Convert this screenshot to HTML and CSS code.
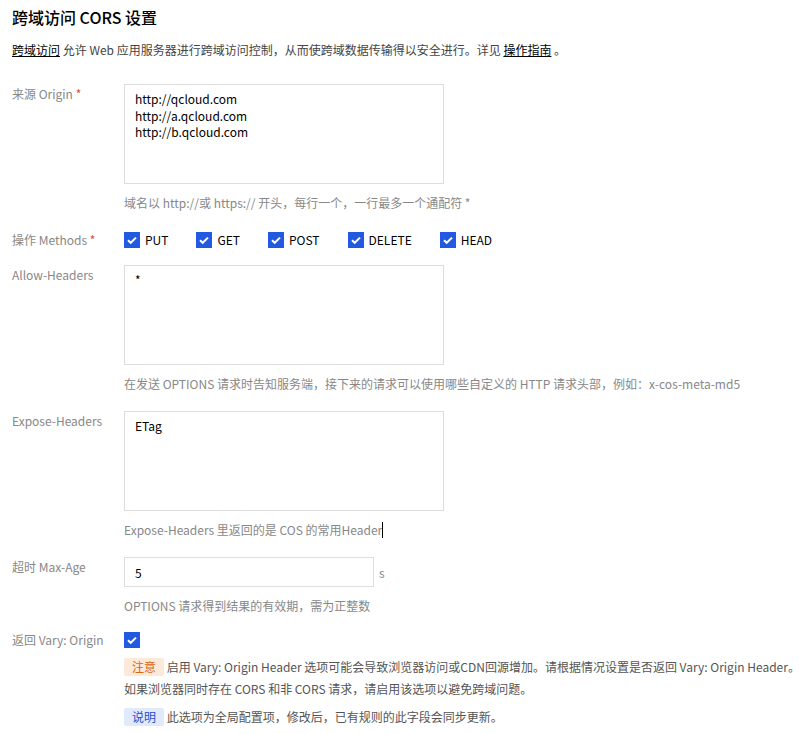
FILE: index.html
```html
<!DOCTYPE html>
<html lang="zh-CN">
<head>
  <meta charset="UTF-8" />
  <meta name="viewport" content="width=device-width, initial-scale=1.0" />
  <title>跨域访问 CORS 设置</title>
  <link rel="stylesheet" href="styles.css">
</head>
<body>
  <h2 class="title">跨域访问 CORS 设置</h2>
  <p class="desc"><a href="#">跨域访问</a> 允许 Web 应用服务器进行跨域访问控制，从而使跨域数据传输得以安全进行。详见 <a href="#">操作指南</a> 。</p>

  <div class="form-item row-origin">
    <label class="form-label">来源 Origin <span class="req">*</span></label>
    <div class="form-control">
      <textarea class="text-area" readonly>http://qcloud.com
http://a.qcloud.com
http://b.qcloud.com</textarea>
      <p class="hint">域名以 http://或 https:// 开头，每行一个，一行最多一个通配符 *</p>
    </div>
  </div>

  <div class="form-item row-methods">
    <label class="form-label">操作 Methods <span class="req">*</span></label>
    <div class="form-control methods">
      <span class="check"><i class="box"><svg viewBox="0 0 16 16"><path d="M4 8.2l2.7 2.6L12 5.6" /></svg></i>PUT</span>
      <span class="check"><i class="box"><svg viewBox="0 0 16 16"><path d="M4 8.2l2.7 2.6L12 5.6" /></svg></i>GET</span>
      <span class="check"><i class="box"><svg viewBox="0 0 16 16"><path d="M4 8.2l2.7 2.6L12 5.6" /></svg></i>POST</span>
      <span class="check"><i class="box"><svg viewBox="0 0 16 16"><path d="M4 8.2l2.7 2.6L12 5.6" /></svg></i>DELETE</span>
      <span class="check"><i class="box"><svg viewBox="0 0 16 16"><path d="M4 8.2l2.7 2.6L12 5.6" /></svg></i>HEAD</span>
    </div>
  </div>

  <div class="form-item">
    <label class="form-label">Allow-Headers</label>
    <div class="form-control">
      <textarea class="text-area" readonly>*</textarea>
      <p class="hint">在发送 OPTIONS 请求时告知服务端，接下来的请求可以使用哪些自定义的 HTTP 请求头部，例如：x-cos-meta-md5</p>
    </div>
  </div>

  <div class="form-item">
    <label class="form-label">Expose-Headers</label>
    <div class="form-control">
      <textarea class="text-area" readonly>ETag</textarea>
      <p class="hint">Expose-Headers 里返回的是 COS 的常用Header<span class="caret"></span></p>
    </div>
  </div>

  <div class="form-item row-age">
    <label class="form-label">超时 Max-Age</label>
    <div class="form-control">
      <div class="input-line">
        <input class="text-input" type="text" value="5" readonly />
        <span class="unit">s</span>
      </div>
      <p class="hint">OPTIONS 请求得到结果的有效期，需为正整数</p>
    </div>
  </div>

  <div class="form-item row-vary">
    <label class="form-label">返回 Vary: Origin</label>
    <div class="form-control">
      <span class="check"><i class="box"><svg viewBox="0 0 16 16"><path d="M4 8.2l2.7 2.6L12 5.6" /></svg></i></span>
      <p class="notice"><span class="tag tag-warn">注意</span> 启用 Vary: Origin Header 选项可能会导致浏览器访问或CDN回源增加。请根据情况设置是否返回 Vary: Origin Header。<br>如果浏览器同时存在 CORS 和非 CORS 请求，请启用该选项以避免跨域问题。</p>
      <p class="notice info"><span class="tag tag-info">说明</span> 此选项为全局配置项，修改后，已有规则的此字段会同步更新。</p>
    </div>
  </div>
</body>
</html>
```

FILE: styles.css
```css
body {
  margin: 0;
  padding: 0 12px;
  font-family: "Noto Sans CJK SC", "Noto Sans", sans-serif;
  font-size: 12px;
  color: #333;
  background-color: #fff;
}
.title {
  margin: 5px 0 0;
  font-size: 16px;
  line-height: 24px;
  font-weight: 500;
  color: #000;
}
.desc {
  margin: 11px 0 24px;
  line-height: 20px;
  color: #444;
}
.desc a {
  color: #000;
  text-decoration: underline;
}
.form-item {
  display: flex;
  margin-bottom: 17px;
}
.row-methods {
  margin-bottom: 15px;
}
.row-age {
  margin-bottom: 14px;
}
.form-label {
  flex: 0 0 112px;
  line-height: 20px;
  color: #888;
}
.req {
  color: #e54545;
}
.form-control {
  flex: 1;
}
.text-area {
  display: block;
  width: 320px;
  height: 100px;
  box-sizing: border-box;
  padding: 6px 10px;
  border: 1px solid #ddd;
  border-radius: 0;
  font-family: inherit;
  font-size: 12px;
  line-height: 16.5px;
  color: #000;
  resize: none;
  outline: none;
}
.hint {
  margin: 9px 0 0;
  line-height: 20px;
  color: #888;
}
.caret {
  display: inline-block;
  width: 1px;
  height: 16px;
  background: #000;
  vertical-align: -3px;
}
.methods {
  display: flex;
  align-items: center;
  height: 20px;
}
.check {
  display: inline-flex;
  align-items: center;
  margin-right: 28px;
  font-size: 12px;
  line-height: 20px;
  color: #000;
}
.box {
  display: inline-block;
  width: 16px;
  height: 16px;
  margin-right: 5px;
  background-color: #2159e0;
}
.box svg {
  display: block;
  width: 16px;
  height: 16px;
  fill: none;
  stroke: #fff;
  stroke-width: 2;
}
.row-vary .check {
  height: 20px;
}
.input-line {
  display: flex;
  align-items: center;
}
.text-input {
  width: 250px;
  height: 30px;
  box-sizing: border-box;
  padding: 0 10px;
  border: 1px solid #ddd;
  border-radius: 0;
  font-family: inherit;
  font-size: 12px;
  color: #000;
  outline: none;
}
.unit {
  margin-left: 5px;
  color: #888;
}
.notice {
  margin: 5px 0 0;
  line-height: 22px;
  color: #555;
  white-space: nowrap;
}
.notice.info {
  margin-top: 6px;
}
.tag {
  display: inline-block;
  padding: 0 8px;
  line-height: 18px;
  border-radius: 2px;
}
.tag-warn {
  background-color: #fde9da;
  color: #d9660d;
}
.tag-info {
  background-color: #e1eafc;
  color: #1f4fc8;
}
```
